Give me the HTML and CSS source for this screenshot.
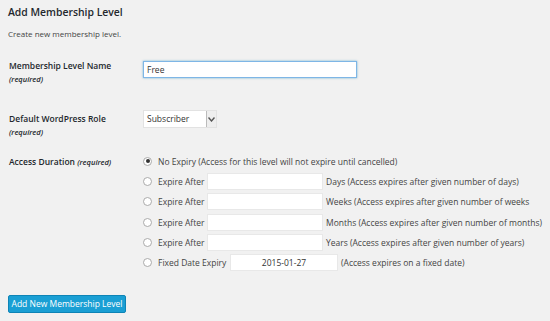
FILE: index.html
```html
<!DOCTYPE html>
<html>
<head>
<meta charset="utf-8">
<link rel="stylesheet" href="styles.css">
</head>
<body>
<div class="wrap">
  <h2 class="title">Add Membership Level</h2>
  <p class="intro">Create new membership level.</p>
  <div class="form">
    <div class="row row-name">
      <div class="label">Membership Level Name<br><em>(required)</em></div>
      <div class="field"><input class="text name" type="text" value="Free"></div>
    </div>
    <div class="row row-role">
      <div class="label">Default WordPress Role<br><em>(required)</em></div>
      <div class="field">
        <div class="select"><span class="sel-val">Subscriber</span><span class="sel-btn"><svg width="7" height="5" viewBox="0 0 7 5"><path d="M0.5 0.5 L3.5 4 L6.5 0.5" fill="none" stroke="#555" stroke-width="1.4"/></svg></span></div>
      </div>
    </div>
    <div class="row row-access">
      <div class="label">Access Duration <em>(required)</em></div>
      <div class="field options">
        <div class="opt"><span class="radio checked"></span><span>No Expiry (Access for this level will not expire until cancelled)</span></div>
        <div class="opt"><span class="radio"></span><span class="lbl">Expire After</span><span class="box"></span><span>Days (Access expires after given number of days)</span></div>
        <div class="opt"><span class="radio"></span><span class="lbl">Expire After</span><span class="box"></span><span>Weeks (Access expires after given number of weeks</span></div>
        <div class="opt"><span class="radio"></span><span class="lbl">Expire After</span><span class="box"></span><span>Months (Access expires after given number of months)</span></div>
        <div class="opt"><span class="radio"></span><span class="lbl">Expire After</span><span class="box"></span><span>Years (Access expires after given number of years)</span></div>
        <div class="opt"><span class="radio"></span><span class="lbl2">Fixed Date Expiry</span><span class="box date">2015-01-27</span><span>(Access expires on a fixed date)</span></div>
      </div>
    </div>
  </div>
  <button class="btn">Add New Membership Level</button>
</div>
</body>
</html>
```

FILE: styles.css
```css
html, body { margin: 0; padding: 0; background: #f1f1f1; }
body { font-family: "Open Sans", "Noto Sans", sans-serif; color: #444; font-size: 8.5px; }
.wrap { padding: 5px 8px 0 8px; }
.title { margin: 0; font-size: 10.4px; font-weight: 600; color: #23282d; line-height: 14px; }
.intro { margin: 9px 0 0 0; font-size: 8px; line-height: 11px; color: #444; }
.row { display: grid; grid-template-columns: 135px 1fr; }
.label { font-weight: 600; color: #23282d; font-size: 8.5px; line-height: 13px; padding-left: 1px; }
.label em { font-size: 7.5px; font-style: italic; }
.row-name { margin-top: 20px; }
.row-role { margin-top: 26px; }
.row-access { margin-top: 16px; }
.text { box-sizing: border-box; height: 17px; background: #fff; border: 1px solid #ddd; outline: none; padding: 0 3px; font-family: inherit; font-size: 8.5px; color: #333; }
.name { width: 214px; border-color: #7eb6e6; box-shadow: 0 0 2px rgba(30,140,190,.6); margin-top: 2px; }
.select { box-sizing: border-box; width: 74px; height: 18px; display: flex; background: #fff; border: 1px solid #e2e2e2; margin-top: -2px; }
.sel-val { flex: 1; padding-left: 3px; line-height: 16px; font-size: 8.5px; color: #333; }
.sel-btn { width: 9px; border-left: 1px solid #bbb; background: #eee; display: flex; align-items: center; justify-content: center; }
.options { display: flex; flex-direction: column; margin-top: -4px; }
.opt { display: flex; align-items: center; height: 20.3px; white-space: nowrap; }
.radio { box-sizing: border-box; width: 9px; height: 9px; border-radius: 50%; border: 1px solid #aaa; background: #fff; margin: 0 6px 0 0; flex: none; position: relative; }
.radio.checked::after { content: ""; position: absolute; left: 1.5px; top: 1.5px; width: 4px; height: 4px; border-radius: 50%; background: #333; }
.lbl { width: 49px; flex: none; }
.lbl2 { width: 72px; flex: none; }
.box { box-sizing: border-box; width: 116px; height: 17px; background: #fff; border: 1px solid #e8e8e8; margin-right: 3px; flex: none; }
.date { width: 108px; text-align: center; line-height: 15px; color: #333; margin-right: 3px; }
.btn { margin-top: 22px; box-sizing: border-box; width: 118px; height: 18px; padding: 0; background: #1a9fd4; border: 1px solid #0e84b6; border-radius: 2px; color: #fff; font-family: inherit; font-size: 8.5px; }
```
